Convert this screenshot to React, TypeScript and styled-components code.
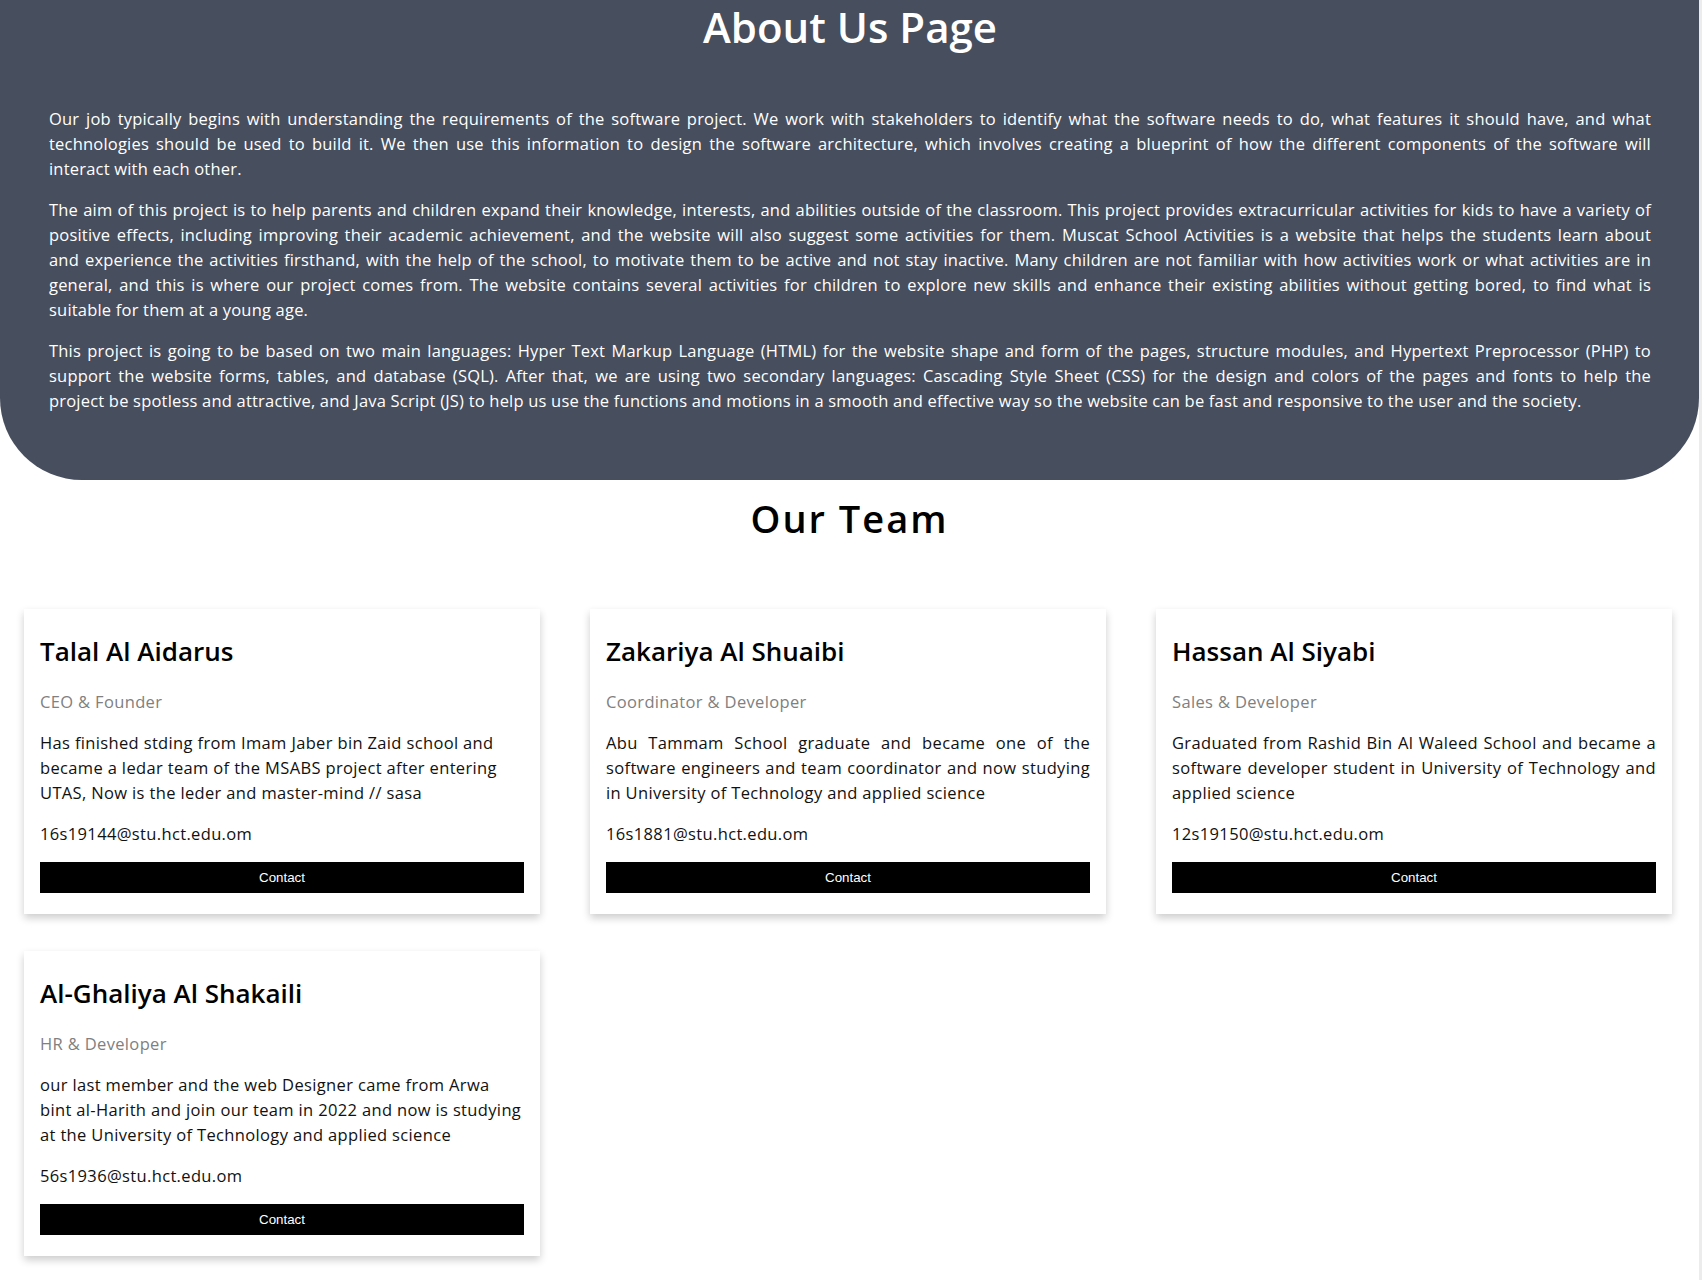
import React from "react";
import styled, { createGlobalStyle } from "styled-components";

const GlobalStyle = createGlobalStyle`
  * { box-sizing: border-box; }
  html, body { margin: 0; padding: 0; background: #ffffff; }
  body {
    font-family: "Open Sans", "DejaVu Sans", sans-serif;
    color: #111111;
  }
`;

const Page = styled.div`
  display: flex;
  min-height: 1280px;
`;

const Main = styled.main`
  flex: 1;
  min-width: 0;
`;

const ScrollTrack = styled.div`
  width: 3px;
  flex: none;
  background: #ececec;
`;

const AboutSection = styled.section`
  background: #474e5d;
  color: #ffffff;
  padding: 3px 48px 67px 49px;
  border-radius: 0 0 82px 82px;
`;

const PageTitle = styled.h1`
  margin: 0 0 56px;
  font-size: 42px;
  line-height: 47px;
  font-weight: 600;
  text-align: center;
`;

const Para = styled.p`
  margin: 0 0 16px;
  font-size: 16.5px;
  line-height: 25px;
  letter-spacing: 0.2px;
  &:last-child { margin-bottom: 0; }
`;

const Line = styled.span<{ $last?: boolean; $justify?: boolean }>`
  display: block;
  text-align: ${(p) => (p.$justify ? "justify" : "left")};
  text-align-last: ${(p) => (p.$justify && !p.$last ? "justify" : "left")};
`;

const TeamTitle = styled.h2`
  margin: 15px 0 68px;
  font-size: 38px;
  line-height: 46px;
  font-weight: 600;
  letter-spacing: 2px;
  text-align: center;
  color: #000000;
`;

const CardGrid = styled.div`
  display: grid;
  grid-template-columns: repeat(3, 516px);
  column-gap: 50px;
  row-gap: 37px;
  padding: 0 24px 25px;
`;

const Card = styled.article`
  background: #ffffff;
  box-shadow: 0 4px 8px 0 rgba(0, 0, 0, 0.2);
  padding: 26px 16px 21px;
`;

const Name = styled.h3`
  margin: 0 0 22px;
  font-size: 26px;
  line-height: 32px;
  font-weight: 600;
  color: #000000;
`;

const TextBlock = styled.p<{ $muted?: boolean }>`
  margin: 0 0 16px;
  font-size: 16.5px;
  line-height: 25px;
  letter-spacing: 0.35px;
  color: ${(p) => (p.$muted ? "#808080" : "#111111")};
`;

const ContactButton = styled.button`
  display: block;
  width: 100%;
  height: 31px;
  border: none;
  outline: 0;
  padding: 8px;
  background: #000000;
  color: #ffffff;
  font-family: "Liberation Sans", Arial, sans-serif;
  font-size: 13.33px;
  line-height: 15px;
  text-align: center;
  cursor: pointer;
`;

const paragraphs: string[][] = [
  [
    "Our job typically begins with understanding the requirements of the software project. We work with stakeholders to identify what the software needs to do, what features it should have, and what",
    "technologies should be used to build it. We then use this information to design the software architecture, which involves creating a blueprint of how the different components of the software will",
    "interact with each other.",
  ],
  [
    "The aim of this project is to help parents and children expand their knowledge, interests, and abilities outside of the classroom. This project provides extracurricular activities for kids to have a variety of",
    "positive effects, including improving their academic achievement, and the website will also suggest some activities for them. Muscat School Activities is a website that helps the students learn about",
    "and experience the activities firsthand, with the help of the school, to motivate them to be active and not stay inactive. Many children are not familiar with how activities work or what activities are in",
    "general, and this is where our project comes from. The website contains several activities for children to explore new skills and enhance their existing abilities without getting bored, to find what is",
    "suitable for them at a young age.",
  ],
  [
    "This project is going to be based on two main languages: Hyper Text Markup Language (HTML) for the website shape and form of the pages, structure modules, and Hypertext Preprocessor (PHP) to",
    "support the website forms, tables, and database (SQL). After that, we are using two secondary languages: Cascading Style Sheet (CSS) for the design and colors of the pages and fonts to help the",
    "project be spotless and attractive, and Java Script (JS) to help us use the functions and motions in a smooth and effective way so the website can be fast and responsive to the user and the society.",
  ],
];

type Member = {
  name: string;
  role: string;
  bio: string[];
  justify: boolean;
  email: string;
};

const members: Member[] = [
  {
    name: "Talal Al Aidarus",
    role: "CEO & Founder",
    bio: [
      "Has finished stding from Imam Jaber bin Zaid school and",
      "became a ledar team of the MSABS project after entering",
      "UTAS, Now is the leder and master-mind // sasa",
    ],
    justify: false,
    email: "16s19144@stu.hct.edu.om",
  },
  {
    name: "Zakariya Al Shuaibi",
    role: "Coordinator & Developer",
    bio: [
      "Abu Tammam School graduate and became one of the",
      "software engineers and team coordinator and now studying",
      "in University of Technology and applied science",
    ],
    justify: true,
    email: "16s1881@stu.hct.edu.om",
  },
  {
    name: "Hassan Al Siyabi",
    role: "Sales & Developer",
    bio: [
      "Graduated from Rashid Bin Al Waleed School and became a",
      "software developer student in University of Technology and",
      "applied science",
    ],
    justify: true,
    email: "12s19150@stu.hct.edu.om",
  },
  {
    name: "Al-Ghaliya Al Shakaili",
    role: "HR & Developer",
    bio: [
      "our last member and the web Designer came from Arwa",
      "bint al-Harith and join our team in 2022 and now is studying",
      "at the University of Technology and applied science",
    ],
    justify: false,
    email: "56s1936@stu.hct.edu.om",
  },
];

export default function App() {
  return (
    <>
      <GlobalStyle />
      <Page>
        <Main>
          <AboutSection>
            <PageTitle>About Us Page</PageTitle>
            {paragraphs.map((lines, pi) => (
              <Para key={pi}>
                {lines.map((l, i) => (
                  <Line key={i} $justify $last={i === lines.length - 1}>
                    {l}
                  </Line>
                ))}
              </Para>
            ))}
          </AboutSection>
          <TeamTitle>Our Team</TeamTitle>
          <CardGrid>
            {members.map((m) => (
              <Card key={m.name}>
                <Name>{m.name}</Name>
                <TextBlock $muted>{m.role}</TextBlock>
                <TextBlock>
                  {m.bio.map((l, i) => (
                    <Line key={i} $justify={m.justify} $last={i === m.bio.length - 1}>
                      {l}
                    </Line>
                  ))}
                </TextBlock>
                <TextBlock>{m.email}</TextBlock>
                <ContactButton>Contact</ContactButton>
              </Card>
            ))}
          </CardGrid>
        </Main>
        <ScrollTrack />
      </Page>
    </>
  );
}
